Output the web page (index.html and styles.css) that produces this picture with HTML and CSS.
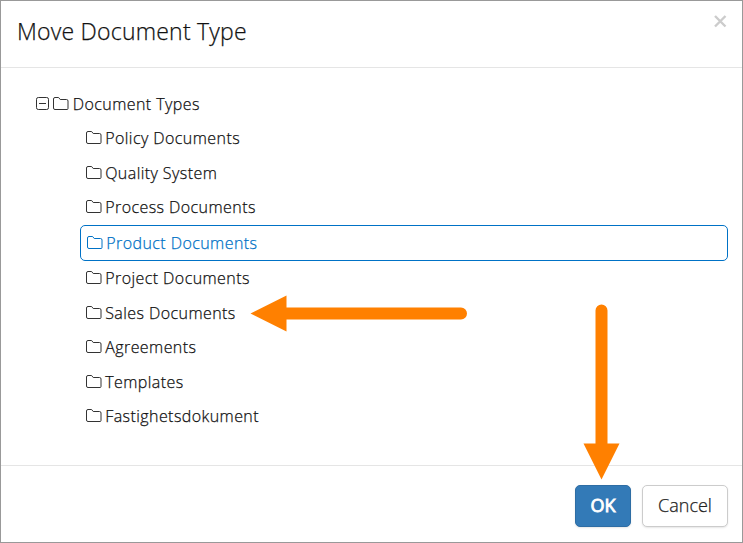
FILE: index.html
```html
<!DOCTYPE html>
<html lang="en">
<head>
<meta charset="utf-8">
<title>Move Document Type</title>
<link rel="stylesheet" href="styles.css">
</head>
<body>
<svg class="defs" width="0" height="0" aria-hidden="true">
  <symbol id="folder" viewBox="0 0 16 14"><path d="M2 .5h3.600l1.600 2h6.300a1.500 1.500 0 0 1 1.500 1.500v7.500a1 1 0 0 1-1 1H2A1.500 1.500 0 0 1 .5 11V2A1.500 1.500 0 0 1 2 .5z"/></symbol>
</svg>
<div class="dialog">
  <header class="header">
    <h1 class="title">Move Document Type</h1>
    <button class="close" aria-label="Close"><svg width="13" height="13" viewBox="0 0 13 13"><path d="M1 1l10.500 10.500M11.500 1L1 11.500"/></svg></button>
  </header>
  <main class="body">
    <div class="row root">
      <svg class="toggle" width="13" height="13" viewBox="0 0 13 13"><rect x=".5" y=".5" width="12" height="12" rx="1.800"/><path d="M3 6.500h7"/></svg>
      <svg class="icon"><use href="#folder"/></svg><span>Document Types</span>
    </div>
    <div class="children">
      <div class="row"><svg class="icon"><use href="#folder"/></svg><span>Policy Documents</span></div>
      <div class="row"><svg class="icon"><use href="#folder"/></svg><span>Quality System</span></div>
      <div class="row"><svg class="icon"><use href="#folder"/></svg><span>Process Documents</span></div>
      <div class="row selected"><svg class="icon"><use href="#folder"/></svg><span>Product Documents</span></div>
      <div class="row"><svg class="icon"><use href="#folder"/></svg><span>Project Documents</span></div>
      <div class="row"><svg class="icon"><use href="#folder"/></svg><span>Sales Documents</span></div>
      <div class="row"><svg class="icon"><use href="#folder"/></svg><span>Agreements</span></div>
      <div class="row"><svg class="icon"><use href="#folder"/></svg><span>Templates</span></div>
      <div class="row"><svg class="icon"><use href="#folder"/></svg><span>Fastighetsdokument</span></div>
    </div>
  </main>
  <footer class="footer">
    <button class="btn primary">OK</button>
    <button class="btn">Cancel</button>
  </footer>
  <svg class="arrows" width="743" height="543" viewBox="0 0 743 543">
    <path class="shaft" d="M284 313.500H461M601.500 310.500V446"/>
    <path class="head" d="M250.500 313.500L286.500 295.500V331.500ZM583.500 443.500H619.500L601.500 479.500Z"/>
  </svg>
</div>
</body>
</html>
```
FILE: styles.css
```css
* { box-sizing: border-box; }
body {
  margin: 0;
  font-family: "Open Sans", "Noto Sans", sans-serif;
  font-weight: 300;
  color: #111;
  background: #fff;
  -webkit-text-stroke: 0.250px currentColor;
}
.defs { position: absolute; }
.dialog {
  position: relative;
  display: flex;
  flex-direction: column;
  width: 743px;
  height: 543px;
  border: 1px solid #999;
}
.header {
  display: flex;
  justify-content: space-between;
  height: 67px;
  padding: 0 15px 0 16px;
  border-bottom: 1px solid #e5e5e5;
}
.title {
  margin: 0;
  font-size: 23px;
  font-weight: 300;
  letter-spacing: 0.220px;
  line-height: 60px;
}
.close {
  width: 13px;
  height: 13px;
  margin-top: 14px;
  padding: 0;
  border: 0;
  background: none;
}
.close svg { display: block; fill: none; stroke: #ccc; stroke-width: 2.400; }
.body {
  flex: 1;
  padding: 18.400px 14px 0 35px;
}
.row {
  display: flex;
  align-items: center;
  height: 34.600px;
  padding-left: 5.500px;
  font-size: 16px;
  letter-spacing: 0.430px;
  white-space: nowrap;
}
.root { padding-left: 0; }
.children { padding-left: 44px; }
.icon {
  width: 16px;
  height: 14px;
  margin-right: 3.700px;
}
.icon, .toggle { flex: none; fill: none; stroke: #333; stroke-width: 1; }
.toggle { margin-right: 4px; }
.selected {
  height: 36px;
  border: 1px solid #0072c6;
  border-radius: 5px;
  color: #0072c6;
}
.selected .icon { stroke: currentColor; }
.footer {
  display: flex;
  justify-content: flex-end;
  gap: 11px;
  height: 77px;
  padding: 19px 14px 0 0;
  border-top: 1px solid #e5e5e5;
}
.btn {
  width: 86px;
  height: 42px;
  padding: 0 0 2px;
  border: 1px solid #ccc;
  border-radius: 5px;
  background: #fff;
  color: #222;
  font: 300 18px "Open Sans", "Noto Sans", sans-serif;
  box-shadow: 0 1px 2px rgba(0, 0, 0, .1);
  -webkit-text-stroke: 0.250px currentColor;
}
.primary {
  width: 56px;
  border-color: #2e6da4;
  background: #337ab7;
  color: #fff;
  font-weight: 400;
  -webkit-text-stroke: 0.900px #fff;
}
.arrows { position: absolute; top: -1px; left: -1px; pointer-events: none; }
.shaft { fill: none; stroke: #ff8000; stroke-width: 12; stroke-linecap: round; }
.head { fill: #ff8000; }
```
